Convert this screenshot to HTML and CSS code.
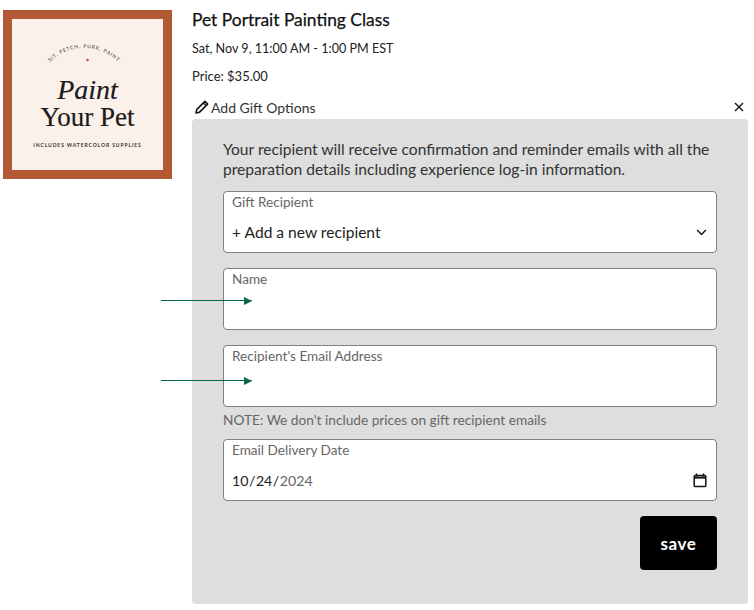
FILE: index.html
```html
<!DOCTYPE html>
<html lang="en">
  <head>
    <meta charset="UTF-8" />
    <meta name="viewport" content="width=device-width, initial-scale=1.0" />
    <title>Gift Options</title>
    <link rel="stylesheet" href="styles.css">
  </head>

  <body>
    <div class="page">
      <div class="thumb">
        <svg viewBox="0 0 169 169" width="169" height="169">
          <rect width="169" height="169" fill="#b35a35" />
          <rect x="9" y="9" width="151" height="151" fill="#fbf1ea" />
          <path id="arc" d="M47 52 A48 48 0 0 1 115 52" fill="none" />
          <text class="arc-text"><textPath href="#arc" startOffset="50%" text-anchor="middle">SIT, FETCH, PURR, PAINT</textPath></text>
          <circle cx="84.5" cy="50" r="1.3" fill="#b35a35" />
          <text class="title-it" x="84.5" y="89" text-anchor="middle">Paint</text>
          <text class="title-rm" x="84.5" y="116" text-anchor="middle">Your Pet</text>
          <text class="small-text" x="84.5" y="137" text-anchor="middle">INCLUDES WATERCOLOR SUPPLIES</text>
        </svg>
      </div>

      <div class="details">
        <h1>Pet Portrait Painting Class</h1>
        <p class="info">Sat, Nov 9, 11:00 AM - 1:00 PM EST</p>
        <p class="info price">Price: $35.00</p>
        <div class="gift-head">
          <span class="gift-link">
            <svg viewBox="0 0 16 16" width="14" height="14">
              <path d="M11.3 1.6l3.1 3.1L5 14.1 1.2 14.9 1.9 11z" fill="none" stroke="#111" stroke-width="1.8" stroke-linejoin="round" />
              <path d="M9.6 3.4l3 3" stroke="#111" stroke-width="1.4" />
            </svg>
            Add Gift Options
          </span>
          <svg class="close" viewBox="0 0 10 10" width="10" height="10">
            <path d="M1 1l8 8M9 1l-8 8" stroke="#111" stroke-width="1.4" />
          </svg>
        </div>

        <div class="panel">
          <p class="intro">Your recipient will receive confirmation and reminder emails with all the preparation details including experience log-in information.</p>

          <div class="field">
            <label>Gift Recipient</label>
            <div class="value">
              <span>+ Add a new recipient</span>
              <svg viewBox="0 0 12 8" width="11" height="7">
                <path d="M1 1.2l5 5 5-5" fill="none" stroke="#111" stroke-width="1.6" />
              </svg>
            </div>
          </div>

          <div class="field gap">
            <label>Name</label>
            <div class="value"></div>
          </div>

          <div class="field gap">
            <label>Recipient's Email Address</label>
            <div class="value"></div>
          </div>
          <p class="note">NOTE: We don't include prices on gift recipient emails</p>

          <div class="field">
            <label>Email Delivery Date</label>
            <div class="value date">
              <span>10<i>/</i>24<i>/</i><em>2024</em></span>
              <svg viewBox="0 0 14 15" width="14" height="15">
                <path d="M3.5 0.5v3M10.5 0.5v3" stroke="#111" stroke-width="1.6" />
                <rect x="1.2" y="2.4" width="11.6" height="11" rx="1" fill="none" stroke="#111" stroke-width="1.5" />
                <path d="M1.2 4.6h11.6" stroke="#111" stroke-width="2" />
              </svg>
            </div>
          </div>

          <div class="actions">
            <button class="save">save</button>
          </div>
        </div>
      </div>

      <!-- annotation arrows over the form -->
      <div class="arrow arrow-name"></div>
      <div class="arrow arrow-email"></div>
    </div>
  </body>
</html>
```

FILE: styles.css
```css
* {
  box-sizing: border-box;
}
body {
  margin: 0;
  background-color: white;
  color: #222;
  font-family: "Lato", "Liberation Sans", sans-serif;
}
.page {
  position: relative;
  display: flex;
  width: 754px;
  height: 610px;
  padding-left: 3px;
}
.thumb {
  flex: none;
  width: 189px;
  padding-top: 10px;
}
.thumb svg {
  display: block;
}
.arc-text {
  font-family: "Lato", sans-serif;
  font-size: 5px;
  letter-spacing: 0.8px;
  fill: #333;
}
.title-it {
  font-family: "Liberation Serif", serif;
  font-style: italic;
  font-size: 28px;
  fill: #1b1b1b;
  stroke: #1b1b1b;
  stroke-width: 0.2px;
}
.title-rm {
  font-family: "Liberation Serif", serif;
  font-size: 27px;
  fill: #1b1b1b;
  stroke: #1b1b1b;
  stroke-width: 0.2px;
}
.small-text {
  font-family: "Lato", sans-serif;
  font-size: 5px;
  font-weight: 700;
  letter-spacing: 0.9px;
  fill: #333;
}
.details {
  width: 556px;
  padding-top: 10px;
}
h1 {
  margin: 0;
  font-size: 17.4px;
  line-height: 20px;
  font-weight: 400;
  color: #111;
  -webkit-text-stroke: 0.25px #111;
}
.info {
  margin: 9px 0 0;
  font-size: 12.6px;
  line-height: 20px;
  color: #222;
}
.price {
  margin-top: 7px;
  font-size: 13px;
}
.gift-head {
  display: flex;
  justify-content: space-between;
  align-items: center;
  height: 20px;
  margin-top: 11px;
  padding: 0 4px 0 3px;
}
.gift-link {
  display: flex;
  align-items: center;
  gap: 2px;
  font-size: 14px;
  color: #333;
}
.panel {
  height: 485px;
  margin-top: 2px;
  padding: 20px 31px 0;
  background-color: #dedede;
  border-radius: 4px;
}
.intro {
  margin: 0 0 12px;
  font-size: 15.6px;
  line-height: 20px;
  color: #333;
}
.field {
  height: 62px;
  padding: 1px 8px 0;
  background-color: white;
  border: 1px solid #808080;
  border-radius: 4px;
}
.field label {
  display: block;
  font-size: 13.6px;
  line-height: 18px;
  color: #666;
}
.gap {
  margin-top: 15px;
}
.value {
  display: flex;
  justify-content: space-between;
  align-items: center;
  height: 22px;
  margin-top: 10px;
  padding-right: 1px;
  font-size: 15.6px;
  color: #222;
}
.date {
  font-size: 14.2px;
}
.value i {
  margin: 0 0.5px;
  font-style: normal;
}
.value em {
  font-style: normal;
  color: #666;
}
.note {
  margin: 5px 0 11px;
  font-size: 13.7px;
  line-height: 16px;
  color: #666;
}
.actions {
  display: flex;
  justify-content: flex-end;
  margin-top: 15px;
}
.save {
  width: 77px;
  height: 54px;
  border: none;
  border-radius: 4px;
  background-color: black;
  color: white;
  font-family: inherit;
  font-size: 17px;
  font-weight: 700;
  letter-spacing: 0.6px;
}
.arrow {
  position: absolute;
  left: 161px;
  width: 91px;
  height: 1px;
  background-color: #0b6647;
}
.arrow::after {
  position: absolute;
  content: "";
  right: 0;
  top: -3.5px;
  border-left: 8px solid #0b6647;
  border-top: 4px solid transparent;
  border-bottom: 4px solid transparent;
}
.arrow-name {
  top: 300px;
}
.arrow-email {
  top: 380px;
}
```
